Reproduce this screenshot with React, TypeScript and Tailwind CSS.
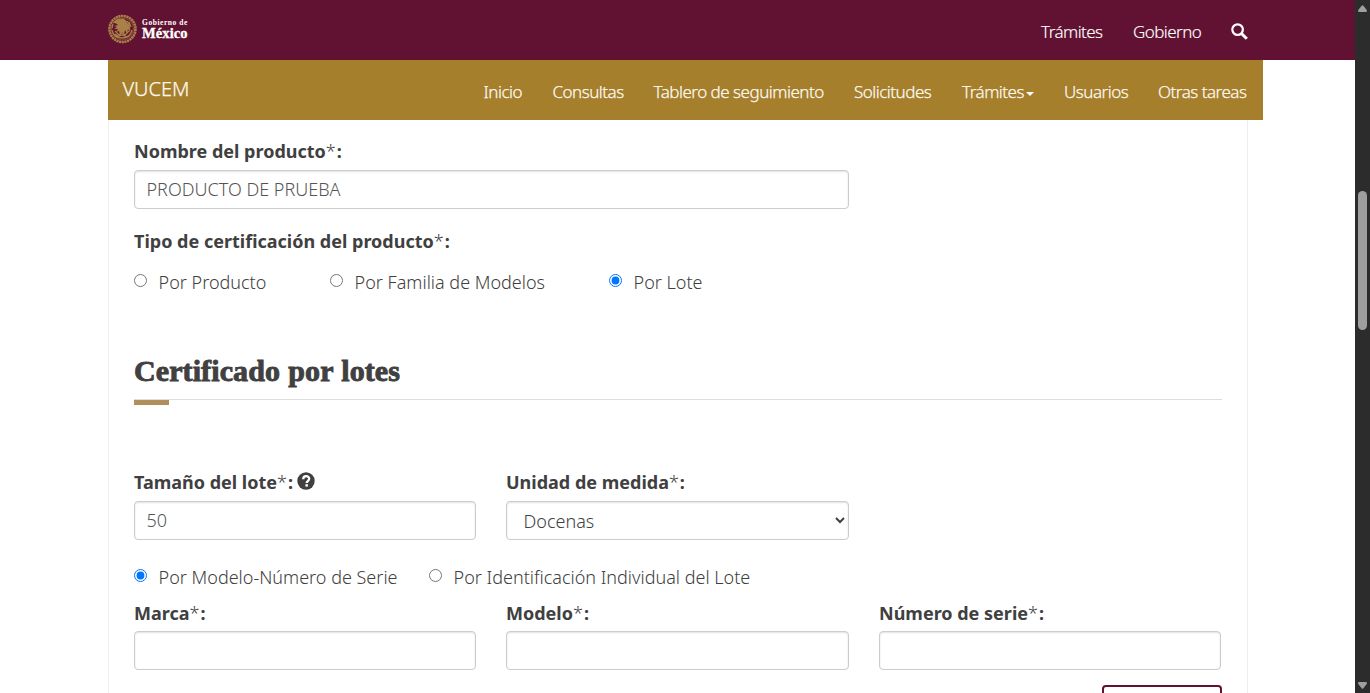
import React from "react";

type NavItem = { label: string; gap: string; caret?: boolean };

const NAV: NavItem[] = [
  { label: "Inicio", gap: "w-[69px]" },
  { label: "Consultas", gap: "w-[101px]" },
  { label: "Tablero de seguimiento", gap: "w-[200.5px]" },
  { label: "Solicitudes", gap: "w-[108px]" },
  { label: "Trámites", gap: "w-[102px]", caret: true },
  { label: "Usuarios", gap: "w-[94px]" },
  { label: "Otras tareas", gap: "w-[105px]" },
];

function Label({ text, className = "", children }: { text: string; className?: string; children?: React.ReactNode }) {
  return (
    <div className={`flex h-[26px] items-center whitespace-nowrap text-[18px] leading-[26px] font-bold ${className}`}>
      <span>
        {text}
        <span className="mr-px font-light">*</span>:
      </span>
      {children}
    </div>
  );
}

function TextInput({ value = "", name }: { value?: string; name: string }) {
  return (
    <input
      aria-label={name}
      defaultValue={value}
      className="block h-[39px] w-full rounded-[4px] border border-[#ccc] bg-white pr-3 pl-[11.5px] pb-px text-[18px] font-light text-[#555] shadow-[inset_0_1px_2px_rgba(0,0,0,0.12)] outline-none"
    />
  );
}

function Radio({ label, checked = false, className = "" }: { label: string; checked?: boolean; className?: string }) {
  return (
    <label className={`flex h-[26px] shrink-0 items-start whitespace-nowrap text-[18px] leading-[24px] font-light ${className}`}>
      <input type="radio" defaultChecked={checked} className="mt-1 mr-[11.6px] h-[13px] w-[13px] shrink-0 accent-[#0075ff]" />
      {label}
    </label>
  );
}

function Seal() {
  return (
    <svg viewBox="0 0 30 30" className="h-[30px] w-[30px]" fill="none" stroke="#a98046">
      <circle cx="15.5" cy="15" r="13" strokeWidth="2.6" strokeDasharray="2.2 .5" />
      <circle cx="15.5" cy="15" r="11" strokeWidth=".5" />
      <path fill="#a98046" stroke="none" d="M6 9c2-3 5-5 8-4 2-1 4 0 4 1l4 2-3 0c3 2 5 5 4 10l-2-3-1 5-2-4-1 5-2-3-2 3-1-4-3 1 2-3-4 0 3-2-3-1 4-1-3-2z" />
      <path strokeWidth="1.3" d="M5 16c1 5 4 8 10 8s9-3 10-8M8 17l4 4 3-2 3 2 4-4M10 23l5-2 5 2M22 8l2 5M6 10l-1 4M20 7l3 5M8 20l3 2" />
    </svg>
  );
}

export default function App() {
  return (
    <div className="flex h-[693px] w-[1370px] overflow-hidden bg-white font-['Noto_Sans','Open_Sans',sans-serif] text-[#404041]">
      <div className="h-full w-[1355px] shrink-0 overflow-hidden">
        <header className="flex h-[60px] bg-[#611232] pl-[107px] text-white">
          <div className="flex w-[934px] items-start pt-[14px]">
            <Seal />
            <div className="ml-[5px] pt-[5px] font-['Liberation_Serif',serif] font-bold whitespace-nowrap">
              <div className="text-[7.5px] leading-[8px] tracking-[0.55px]">Gobierno de</div>
              <div className="text-[14.5px] leading-[12px] tracking-[0.1px] [-webkit-text-stroke:0.3px_white]">México</div>
            </div>
          </div>
          <nav className="flex items-start pt-[19px] text-[17px] leading-[26px] font-light whitespace-nowrap [-webkit-text-stroke:0.15px_white]">
            <a className="w-[92px] tracking-[-0.55px]">Trámites</a>
            <a className="w-[98px] tracking-[-0.55px]">Gobierno</a>
            <svg viewBox="0 0 17 17" className="mt-[3.5px] h-[17px] w-[17px]" fill="none" stroke="white">
              <circle cx="6.6" cy="6.6" r="5.3" strokeWidth="2.2" />
              <path d="M10.5 10.5l5.3 5.3" strokeWidth="3" />
            </svg>
          </nav>
        </header>

        <div className="ml-[108px] flex h-[60px] w-[1155px] bg-[#a57f2c] font-light whitespace-nowrap text-[#fdf9f0] [-webkit-text-stroke:0.25px_#fdf9f0]">
          <div className="w-[376.6px] pt-[14px] pl-[14.4px] text-[20px] leading-[30px]">VUCEM</div>
          <nav className="flex items-start pt-[19px] text-[17px] leading-[26px]">
            {NAV.map((item) => (
              <a key={item.label} className={`flex shrink-0 items-center tracking-[-0.5px] ${item.gap}`}>
                {item.label}
                {item.caret && <span className="mt-[3px] ml-[2.4px] border-x-4 border-t-4 border-x-transparent border-t-white" />}
              </a>
            ))}
          </nav>
        </div>

        <main className="ml-[108px] h-[573px] w-[1140px] border-x border-[#eee] px-[25px] pt-[18px]">
          <Label text="Nombre del producto" />
          <div className="mt-[6px] w-[715px]">
            <TextInput name="Nombre del producto" value="PRODUCTO DE PRUEBA" />
          </div>
          <Label text="Tipo de certificación del producto" className="mt-[19px]" />
          <div className="mt-4 flex">
            <Radio label="Por Producto" className="w-[196px]" />
            <Radio label="Por Familia de Modelos" className="w-[279px]" />
            <Radio label="Por Lote" checked />
          </div>

          <h2 className="mt-[58px] h-[46px] w-[1088px] border-b border-[#ddd] font-['Liberation_Serif',serif] text-[30px] leading-[34px] font-bold tracking-[0.1px] whitespace-nowrap [-webkit-text-stroke:0.9px_#404041] [word-spacing:0.6px]">
            Certificado por lotes
          </h2>
          <div className="h-[5px] w-[35px] bg-[#b38e5d]" />

          <div className="mt-16 grid w-[1087px] grid-cols-[342px_343px_342px] gap-x-[30px]">
            <div>
              <Label text="Tamaño del lote">
                <svg viewBox="0 0 18 18" className="ml-[4px] -mt-0.5 h-[18px] w-[18px]">
                  <circle cx="9" cy="9" r="8.7" fill="#404041" />
                  <path d="M6.2 7.2c0-4 6-4 6-.4 0 2.2-2.5 1.8-2.5 4.2" fill="none" stroke="white" strokeWidth="2.3" />
                  <rect x="8.4" y="12.2" width="2.5" height="2.4" fill="white" />
                </svg>
              </Label>
              <div className="mt-[6px]">
                <TextInput name="Tamaño del lote" value="50" />
              </div>
            </div>
            <div>
              <Label text="Unidad de medida" />
              <select className="mt-[6px] block h-[39px] w-full rounded-[4px] border border-[#ccc] bg-white pr-3 pl-[12.5px] text-[18px] font-light shadow-[inset_0_1px_2px_rgba(0,0,0,0.12)]">
                <option>Docenas</option>
              </select>
            </div>
          </div>

          <div className="mt-[25px] flex">
            <Radio label="Por Modelo-Número de Serie" checked className="w-[295px]" />
            <Radio label="Por Identificación Individual del Lote" />
          </div>

          <div className="mt-[9px] grid w-[1087px] grid-cols-[342px_343px_342px] gap-x-[30px]">
            {["Marca", "Modelo", "Número de serie"].map((name) => (
              <div key={name}>
                <Label text={name} />
                <div className="mt-[5px]">
                  <TextInput name={name} />
                </div>
              </div>
            ))}
          </div>
          <div className="mt-[15px] flex w-[1088px] justify-end">
            <button aria-label="Agregar" className="h-10 w-[120px] rounded-[4px] border-2 border-[#611232] bg-white" />
          </div>
        </main>
      </div>

      <aside className="flex h-full w-[15px] shrink-0 flex-col items-center bg-[#2c2c2c]">
        <svg viewBox="0 0 9 7" className="mt-[5px] h-[7px] w-[9px]" fill="#9f9f9f">
          <path d="M3.6.7Q4.5-.4 5.4.7L8.7 5Q9.4 7 8 7H1Q-.4 7 .3 5z" />
        </svg>
        <div className="mt-[179px] h-[139px] w-[9px] rounded-full bg-[#9f9f9f]" />
        <svg viewBox="0 0 9 7" className="mt-[352px] h-[7px] w-[9px] rotate-180" fill="#9f9f9f">
          <path d="M3.6.7Q4.5-.4 5.4.7L8.7 5Q9.4 7 8 7H1Q-.4 7 .3 5z" />
        </svg>
      </aside>
    </div>
  );
}
